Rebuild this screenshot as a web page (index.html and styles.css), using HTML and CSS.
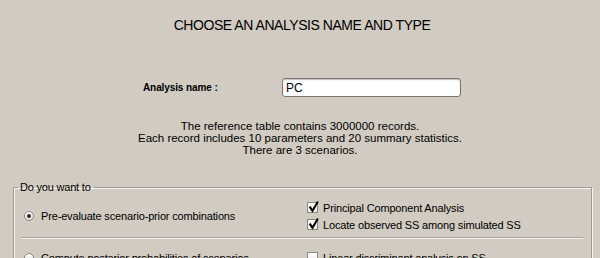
FILE: index.html
```html
<!DOCTYPE html>
<html lang="en">
<head>
    <meta charset="UTF-8">
    <title>Analysis name and type</title>
    <link rel="stylesheet" href="styles.css">
</head>
<body>
<div class="page">
    <h1 class="title">CHOOSE AN ANALYSIS NAME AND TYPE</h1>

    <div class="name-row">
        <label for="analysisName" class="name-label">Analysis name :</label>
        <input type="text" id="analysisName" class="name-input" value="PC">
    </div>

    <div class="info">
        The reference table contains 3000000 records.<br>
        Each record includes 10 parameters and 20 summary statistics.<br>
        There are 3 scenarios.
    </div>

    <fieldset class="choices">
        <legend>Do you want to</legend>

        <div class="option">
            <div class="choice"><span class="radio on"></span>Pre-evaluate scenario-prior combinations</div>
            <div class="checks">
                <label class="check">
                    <span class="box"><svg viewBox="0 0 11 11" width="11" height="11"><path d="M2.2 5.4 L4.5 8.8 L9.4 0.4" /></svg></span>
                    Principal Component Analysis
                </label>
                <label class="check">
                    <span class="box"><svg viewBox="0 0 11 11" width="11" height="11"><path d="M2.2 5.4 L4.5 8.8 L9.4 0.4" /></svg></span>
                    Locate observed SS among simulated SS
                </label>
            </div>
        </div>

        <hr class="sep">

        <div class="option">
            <div class="choice"><span class="radio"></span>Compute posterior probabilities of scenarios</div>
            <div class="checks">
                <label class="check">
                    <span class="box"></span>
                    Linear discriminant analysis on SS
                </label>
            </div>
        </div>
    </fieldset>
</div>
</body>
</html>
```

FILE: styles.css
```css
body { margin: 0; background: #d1cbc2; color: #000; font-family: "Liberation Sans", Arial, sans-serif; overflow: hidden; }
.page { width: 600px; }

.title { margin: 17px 0 0; padding-left: 4px; font-size: 14px; line-height: 17px; font-weight: normal; letter-spacing: -0.45px; text-align: center; }

.name-row { display: flex; align-items: center; height: 19px; margin-top: 44px; padding-left: 143px; }
.name-label { width: 139px; font-size: 10px; font-weight: bold; letter-spacing: -0.1px; }
.name-input { box-sizing: border-box; width: 179px; height: 19px; margin: 0; padding: 0 3px; border: 1px solid #7a7670; border-radius: 3px; background: #fff; box-shadow: inset 0 1px 1px rgba(0,0,0,0.25); font-family: "Liberation Sans", Arial, sans-serif; font-size: 12px; color: #000; }

.info { margin-top: 23px; font-size: 11.5px; line-height: 12px; text-align: center; }

.choices { margin: 24px 8px 0 13px; padding: 5px 8px 20px; border: 1px solid #9d9993; box-shadow: inset 1px 1px 0 #f6f4f0, 1px 1px 0 #f6f4f0; }
.choices legend { margin-left: -4px; padding: 0 3px 0 2px; font-size: 11px; line-height: 14px; letter-spacing: -0.2px; }

.option { display: grid; grid-template-columns: 285px 1fr; align-items: center; font-size: 11px; letter-spacing: -0.16px; }
.choice { display: flex; align-items: center; padding-left: 2px; }
.radio { box-sizing: border-box; width: 10px; height: 10px; margin-right: 7px; border: 1px solid #8b8882; border-radius: 50%; background: linear-gradient(#fff, #e4e2de); display: flex; align-items: center; justify-content: center; }
.radio.on::after { content: ""; width: 4px; height: 4px; border-radius: 50%; background: #2a2a2a; }

.check { display: flex; align-items: center; height: 17px; }
.box { box-sizing: border-box; width: 11px; height: 11px; margin-right: 5px; border: 1px solid #8b8882; background: linear-gradient(#fff, #eceae6); position: relative; }
.box svg { position: absolute; left: 0; top: -1px; overflow: visible; }
.box path { fill: none; stroke: #000; stroke-width: 2; stroke-linecap: square; stroke-linejoin: miter; }

.sep { height: 0; margin: 4px 0 10px; border: 0; border-top: 1px solid #a6a29c; border-bottom: 1px solid #f6f4f0; }
```
